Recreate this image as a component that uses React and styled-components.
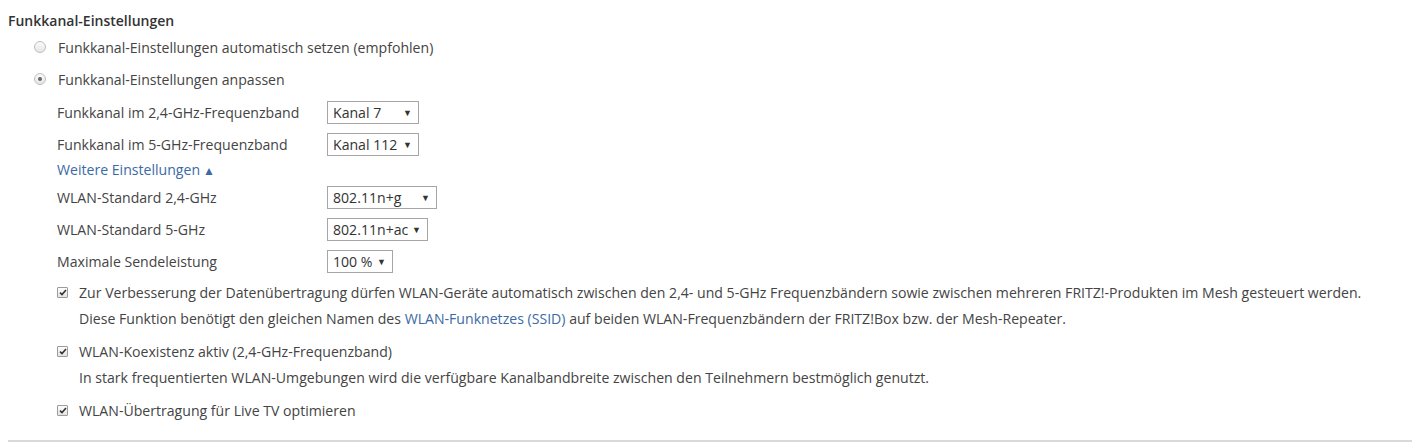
import React from 'react';
import styled, { createGlobalStyle } from 'styled-components';

const GlobalStyle = createGlobalStyle`
  body {
    margin: 0;
    background: #fff;
    font-family: "Open Sans", Lato, sans-serif;
    font-size: 14.1px;
    color: #444;
  }
`;

const Page = styled.div`
  padding: 10px 0 0 8px;
`;

const Heading = styled.div`
  font-weight: 600;
  font-size: 14px;
  line-height: 21px;
  color: #333;
`;

const OptionRow = styled.label`
  display: flex;
  align-items: center;
  height: 32px;
  padding-left: 26px;
  gap: 12px;
`;

const Radio = styled.span`
  width: 10px;
  height: 10px;
  border-radius: 50%;
  border: 1px solid #bdbdbd;
  background: linear-gradient(#fafafa, #e6e6e6);
  display: flex;
  align-items: center;
  justify-content: center;
  &::after {
    content: '';
    width: 4px;
    height: 4px;
    border-radius: 50%;
    background: ${p => (p.checked ? '#666' : 'transparent')};
  }
`;

const Details = styled.div`
  padding: 1px 0 0 49px;
`;

const FieldRow = styled.div`
  display: grid;
  grid-template-columns: 270px auto;
  align-items: center;
  height: 32px;
`;

const Select = styled.div`
  box-sizing: border-box;
  width: ${p => p.width}px;
  height: 23px;
  border: 1px solid #a6a6a6;
  display: flex;
  align-items: center;
  justify-content: space-between;
  padding: 0 6px 0 5px;
  color: #333;
`;

const Arrow = styled.span`
  font-size: 9px;
  color: #333;
`;

const MoreLink = styled.a`
  display: block;
  line-height: 20px;
  color: #3b6aa6;
  text-decoration: none;
  span {
    font-size: 12px;
    margin-left: 3px;
  }
`;

const CheckItem = styled.div`
  margin-bottom: ${p => (p.last ? 15 : 5)}px;
`;

const CheckRow = styled.label`
  display: flex;
  align-items: center;
  height: 30px;
  gap: 11px;
`;

const Box = styled.span`
  box-sizing: border-box;
  width: 11px;
  height: 11px;
  border: 1px solid #9b9b9b;
  border-radius: 1px;
  background: linear-gradient(#fdfdfd, #e4e4e4);
  display: flex;
  align-items: center;
  justify-content: center;
`;

const Description = styled.div`
  padding-left: 22px;
  line-height: 24px;
`;

const Link = styled.a`
  color: #3b6aa6;
  text-decoration: none;
`;

const Divider = styled.div`
  border-top: 2px solid #d9d9d9;
`;

function Checkbox() {
  return (
    <Box>
      <svg width="8" height="7" viewBox="0 0 8 7">
        <path d="M1 3.6 L3 5.6 L7 1" fill="none" stroke="#333" strokeWidth="1.6" />
      </svg>
    </Box>
  );
}

const fields = [
  { label: 'Funkkanal im 2,4-GHz-Frequenzband', value: 'Kanal 7', width: 92 },
  { label: 'Funkkanal im 5-GHz-Frequenzband', value: 'Kanal 112', width: 92 },
];

const advanced = [
  { label: 'WLAN-Standard 2,4-GHz', value: '802.11n+g', width: 110 },
  { label: 'WLAN-Standard 5-GHz', value: '802.11n+ac', width: 101 },
  { label: 'Maximale Sendeleistung', value: '100 %', width: 66 },
];

function Field({ label, value, width }) {
  return (
    <FieldRow>
      <span>{label}</span>
      <Select width={width}>
        {value}
        <Arrow>▼</Arrow>
      </Select>
    </FieldRow>
  );
}

export default function App() {
  return (
    <>
      <GlobalStyle />
      <Page>
        <Heading>Funkkanal-Einstellungen</Heading>
        <OptionRow>
          <Radio />
          Funkkanal-Einstellungen automatisch setzen (empfohlen)
        </OptionRow>
        <OptionRow>
          <Radio checked />
          Funkkanal-Einstellungen anpassen
        </OptionRow>
        <Details>
          {fields.map(f => <Field key={f.label} {...f} />)}
          <MoreLink href="#">Weitere Einstellungen<span>▲</span></MoreLink>
          {advanced.map(f => <Field key={f.label} {...f} />)}
          <CheckItem>
            <CheckRow>
              <Checkbox />
              Zur Verbesserung der Datenübertragung dürfen WLAN-Geräte automatisch zwischen den 2,4- und 5-GHz Frequenzbändern sowie zwischen mehreren FRITZ!-Produkten im Mesh gesteuert werden.
            </CheckRow>
            <Description>
              Diese Funktion benötigt den gleichen Namen des <Link href="#">WLAN-Funknetzes (SSID)</Link> auf beiden WLAN-Frequenzbändern der FRITZ!Box bzw. der Mesh-Repeater.
            </Description>
          </CheckItem>
          <CheckItem>
            <CheckRow>
              <Checkbox />
              WLAN-Koexistenz aktiv (2,4-GHz-Frequenzband)
            </CheckRow>
            <Description>
              In stark frequentierten WLAN-Umgebungen wird die verfügbare Kanalbandbreite zwischen den Teilnehmern bestmöglich genutzt.
            </Description>
          </CheckItem>
          <CheckItem last>
            <CheckRow>
              <Checkbox />
              WLAN-Übertragung für Live TV optimieren
            </CheckRow>
          </CheckItem>
        </Details>
        <Divider />
      </Page>
    </>
  );
}
